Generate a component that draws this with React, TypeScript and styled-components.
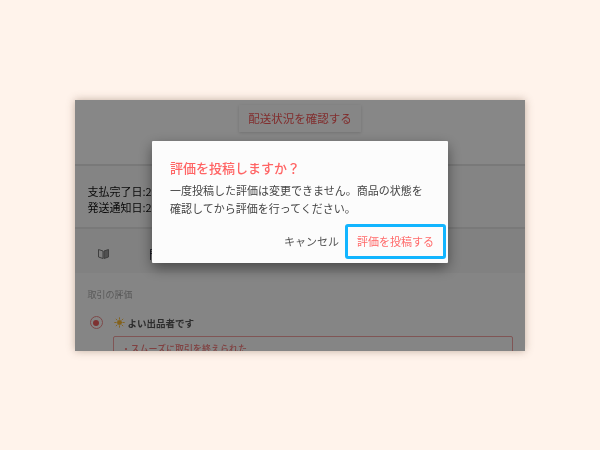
import React from "react";
import styled, { createGlobalStyle } from "styled-components";

const Global = createGlobalStyle`
  html, body { margin: 0; padding: 0; background: #fff3eb; }
  body { font-family: "Noto Sans CJK JP", "Liberation Sans", sans-serif; }
`;
const Page = styled.div`
  width: 600px; height: 450px; display: flex; align-items: center; justify-content: center; background: #fff3eb;
`;
const Screen = styled.div`
  position: relative; width: 450px; height: 251px; overflow: hidden; background: #fafafa;
  box-shadow: 0 0 8px rgba(120, 90, 70, 0.45); filter: blur(0.3px);
`;
const Content = styled.div`
  filter: blur(0.5px);
`;
const TopSection = styled.div`
  height: 66px; padding-top: 5px; box-sizing: border-box; display: flex; justify-content: center; align-items: flex-start;
  background: #fff; border-bottom: 2px solid #e4e4e4;
`;
const StatusButton = styled.div`
  width: 122px; height: 27px; display: flex; align-items: center; justify-content: center;
  background: #fdfdfd; box-shadow: 0 1px 3px rgba(0,0,0,.16); color: #f25858; font-size: 11.5px;
`;
const DateSection = styled.div`
  height: 63px; box-sizing: border-box; padding: 17px 0 0 12.5px; background: #fafafa; border-bottom: 2px solid #e4e4e4;
  font-size: 11px; line-height: 16px; color: #111;
`;
const TabRow = styled.div`
  height: 44px; box-sizing: border-box; display: flex; align-items: center; padding: 6px 0 0 23px; gap: 40px;
  background: #f4f4f4; font-size: 11px; color: #333;
`;
const TabLabel = styled.span`
  color: #223;
`;
const Review = styled.div`
  padding: 14px 12.5px 0; background: #fbfbfb;
`;
const ReviewTitle = styled.div`
  font-size: 9px; line-height: 16px; color: #aaa;
`;
const RatingRow = styled.div`
  display: flex; align-items: center; margin-top: 11px; height: 18px; font-size: 9.5px; font-weight: 700; color: #555;
`;
const Radio = styled.span`
  width: 13px; height: 13px; box-sizing: border-box; border-radius: 50%; border: 1.5px solid #ee8a8a; margin: 0 11px 0 2px;
  display: flex; align-items: center; justify-content: center;
  &::after { content: ""; width: 6px; height: 6px; border-radius: 50%; background: #ee5f5f; }
`;
const Sun = styled.svg`
  width: 11px; height: 11px; margin-right: 3px;
`;
const ReasonBox = styled.div`
  margin: 4px 0 0 25px; height: 60px; box-sizing: border-box; border: 1px solid #f2a0a0; border-radius: 2px;
  padding: 5px 8px; font-size: 9px; line-height: 13px; color: #f27a7a; font-weight: 500;
`;
const Overlay = styled.div`
  position: absolute; inset: 0; background: rgba(0, 0, 0, 0.47); display: flex; justify-content: center; align-items: flex-start; padding-top: 41.5px;
`;
const Dialog = styled.div`
  width: 296px; height: 122px; box-sizing: border-box; background: #fcfcfc; padding: 17.5px 2px 4.5px 18px;
  box-shadow: 0 5px 14px rgba(0,0,0,.45); display: flex; flex-direction: column; border-radius: 1px;
`;
const Title = styled.div`
  font-size: 13px; line-height: 18px; color: #ff6464; font-weight: 500;
`;
const Body = styled.div`
  margin-top: 4px; font-size: 11px; line-height: 18px; color: #444; width: 256px;
`;
const Actions = styled.div`
  margin-top: auto; display: flex; justify-content: flex-end; align-items: center; gap: 6px;
`;
const Cancel = styled.button`
  all: unset; font-size: 11px; color: #555;
`;
const Submit = styled.button`
  all: unset; box-sizing: border-box; width: 101px; height: 35px; display: flex; align-items: center; justify-content: center;
  border: 3px solid #12b5ff; border-radius: 3px; font-size: 11px; color: #ff6a6a; background: #fcfcfc;
`;

export default function App() {
  return (
    <Page>
      <Global />
      <Screen>
        <Content>
          <TopSection><StatusButton>配送状況を確認する</StatusButton></TopSection>
          <DateSection>
            <div>支払完了日:2</div>
            <div>発送通知日:2</div>
          </DateSection>
          <TabRow>
            <svg width="11" height="11" viewBox="0 0 11 11" fill="none">
              <path d="M.5 1.5l4.5 1.5v7.5L.5 9z" fill="#eee" stroke="#777" strokeWidth="1" />
              <path d="M10.5 1.5L6 3v7.5L10.5 9z" fill="#999" stroke="#777" strokeWidth="1" />
            </svg>
            <TabLabel>門</TabLabel>
          </TabRow>
          <Review>
            <ReviewTitle>取引の評価</ReviewTitle>
            <RatingRow>
              <Radio />
              <Sun viewBox="0 0 12 12" fill="none" stroke="#f7b733" strokeWidth="1" strokeLinecap="round">
                <circle cx="6" cy="6" r="2.2" fill="#f7b733" />
                <path d="M6 .8v1.6M6 9.6v1.6M.8 6h1.6M9.6 6h1.6M2.3 2.3l1.1 1.1M8.6 8.6l1.1 1.1M2.3 9.7l1.1-1.1M8.6 3.4l1.1-1.1" />
              </Sun>
              よい出品者です
            </RatingRow>
            <ReasonBox>・スムーズに取引を終えられた</ReasonBox>
          </Review>
        </Content>
        <Overlay>
          <Dialog>
            <Title>評価を投稿しますか？</Title>
            <Body>一度投稿した評価は変更できません。商品の状態を確認してから評価を行ってください。</Body>
            <Actions>
              <Cancel>キャンセル</Cancel>
              <Submit>評価を投稿する</Submit>
            </Actions>
          </Dialog>
        </Overlay>
      </Screen>
    </Page>
  );
}
